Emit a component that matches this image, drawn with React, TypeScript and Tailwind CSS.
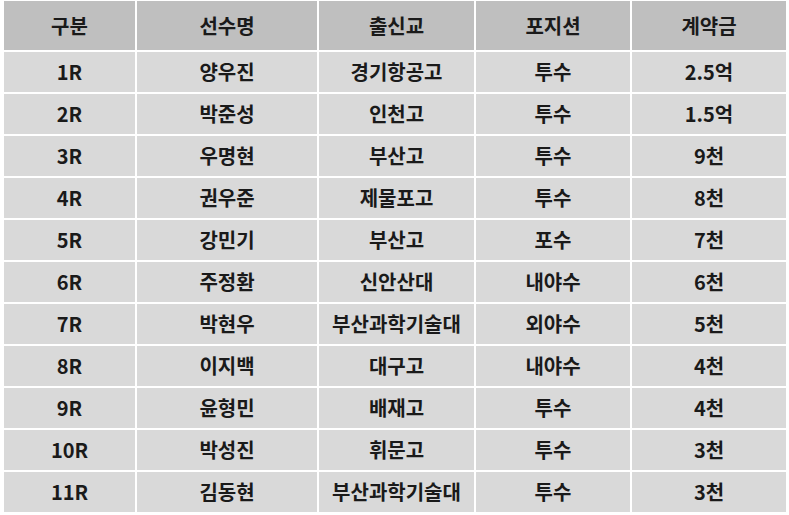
import React from "react";

const rows: string[][] = [
  ["1R", "양우진", "경기항공고", "투수", "2.5억"],
  ["2R", "박준성", "인천고", "투수", "1.5억"],
  ["3R", "우명현", "부산고", "투수", "9천"],
  ["4R", "권우준", "제물포고", "투수", "8천"],
  ["5R", "강민기", "부산고", "포수", "7천"],
  ["6R", "주정환", "신안산대", "내야수", "6천"],
  ["7R", "박현우", "부산과학기술대", "외야수", "5천"],
  ["8R", "이지백", "대구고", "내야수", "4천"],
  ["9R", "윤형민", "배재고", "투수", "4천"],
  ["10R", "박성진", "휘문고", "투수", "3천"],
  ["11R", "김동현", "부산과학기술대", "투수", "3천"],
];

const headers = ["구분", "선수명", "출신교", "포지션", "계약금"];

export default function App() {
  return (
    <div
      className="w-[789px] h-[515px] bg-white pl-[4px] pt-[1px] overflow-hidden"
      style={{ fontFamily: '"Noto Sans CJK KR", "Noto Sans", sans-serif' }}
    >
      <div className="grid grid-cols-[131px_180px_155px_154px_154px] gap-[2px] text-[20px] font-bold text-[#1a1a1a]">
        {headers.map((h) => (
          <div key={h} className="h-[49px] bg-[#bfbfbf] flex items-center justify-center">
            {h}
          </div>
        ))}
        {rows.map((r, i) =>
          r.map((c, j) => (
            <div key={i + "-" + j} className="h-[40px] bg-[#d9d9d9] flex items-center justify-center">
              {c}
            </div>
          ))
        )}
      </div>
    </div>
  );
}
